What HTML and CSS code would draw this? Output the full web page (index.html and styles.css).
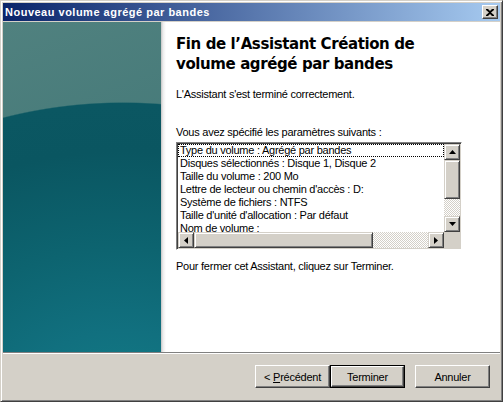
FILE: index.html
```html
<!DOCTYPE html>
<html lang="fr">
<head>
<meta charset="utf-8">
<title>Nouveau volume agrégé par bandes</title>
<link rel="stylesheet" href="styles.css">
</head>
<body>
<div class="window">
  <div class="titlebar">
    <span class="title">Nouveau volume agrégé par bandes</span>
    <span class="close"><svg width="8" height="7" viewBox="0 0 8 7"><path d="M0 0h2l2 2 2-2h2v1l-3 2.5 3 2.5v1h-2l-2-2-2 2h-2v-1l3-2.5-3-2.5z" fill="#000"/></svg></span>
  </div>
  <div class="content">
    <div class="side"></div>
    <div class="main">
      <h1 class="heading">Fin de l’Assistant Création de volume agrégé par bandes</h1>
      <p class="text done">L'Assistant s'est terminé correctement.</p>
      <p class="text params">Vous avez spécifié les paramètres suivants :</p>
      <div class="listbox">
        <div class="listtop">
          <div class="items">
            <div class="item focus">Type du volume : Agrégé par bandes</div>
            <div class="item">Disques sélectionnés : Disque 1, Disque 2</div>
            <div class="item">Taille du volume : 200 Mo</div>
            <div class="item">Lettre de lecteur ou chemin d'accès : D:</div>
            <div class="item">Système de fichiers : NTFS</div>
            <div class="item">Taille d'unité d'allocation : Par défaut</div>
            <div class="item">Nom de volume :</div>
          </div>
          <div class="vscroll">
            <div class="sbtn"><svg width="7" height="4" viewBox="0 0 7 4"><path d="M3.5 0L7 4H0z" fill="#000"/></svg></div>
            <div class="vthumb"></div>
            <div class="vtrack"></div>
            <div class="sbtn"><svg width="7" height="4" viewBox="0 0 7 4"><path d="M0 0h7L3.5 4z" fill="#000"/></svg></div>
          </div>
        </div>
        <div class="listbottom">
          <div class="hscroll">
            <div class="sbtn"><svg width="4" height="7" viewBox="0 0 4 7"><path d="M0 3.5L4 0v7z" fill="#000"/></svg></div>
            <div class="hthumb"></div>
            <div class="htrack"></div>
            <div class="sbtn"><svg width="4" height="7" viewBox="0 0 4 7"><path d="M0 0l4 3.5L0 7z" fill="#000"/></svg></div>
          </div>
          <div class="corner"></div>
        </div>
      </div>
      <p class="text close-hint">Pour fermer cet Assistant, cliquez sur Terminer.</p>
    </div>
  </div>
  <div class="footer">
    <span class="btn"><span>&lt; <u>P</u>récédent</span></span>
    <span class="btn default"><span class="btn-inner">Terminer</span></span>
    <span class="btn cancel">Annuler</span>
  </div>
</div>
</body>
</html>
```
FILE: styles.css
```css
html, body {
  margin: 0;
  padding: 0;
  background: #d4d0c8;
}
.window {
  box-sizing: border-box;
  width: 503px;
  height: 402px;
  background: #d4d0c8;
  border: 1px solid;
  border-color: #d4d0c8 #404040 #404040 #d4d0c8;
  box-shadow: inset 1px 1px #fff, inset -1px -1px #808080;
  padding: 2px;
  display: flex;
  flex-direction: column;
  font-family: "Liberation Sans", Arial, sans-serif;
  font-size: 11px;
  letter-spacing: -0.25px;
  color: #000;
}
.titlebar {
  height: 18px;
  margin-bottom: 1px;
  background: linear-gradient(to right, #0a246a, #a6caf0);
  display: flex;
  align-items: center;
  justify-content: space-between;
  padding: 0 2px 0 2px;
}
.title {
  color: #fff;
  font-weight: bold;
  font-size: 11px;
  letter-spacing: 0.5px;
}
.close {
  box-sizing: border-box;
  width: 16px;
  height: 14px;
  background: #d4d0c8;
  border: 1px solid;
  border-color: #fff #404040 #404040 #fff;
  box-shadow: inset -1px -1px #808080;
  display: flex;
  align-items: center;
  justify-content: center;
  padding-right: 1px;
}
.content {
  height: 330px;
  display: flex;
  background: #fff;
}
.side {
  width: 158px;
  flex: none;
  background:
    radial-gradient(ellipse 400px 327px at 120px 407px, #138088 0%, #11707f 30%, #0d6470 55%, #0a5661 85%, #0b5762 99.6%, rgba(0,0,0,0) 100%),
    linear-gradient(160deg, #50817f 0%, #477b7a 40%, #306b6e 100%);
}
.main {
  flex: 1;
  padding: 12px 20px 0 15px;
  background: linear-gradient(to right, #c4c4c4 0, #ececec 2px, #fff 5px);
}
.heading {
  margin: 0;
  font-family: "DejaVu Sans", Verdana, sans-serif;
  font-weight: bold;
  font-size: 15px;
  line-height: 20px;
  width: 260px;
  letter-spacing: -0.4px;
}
.text {
  margin: 0;
  line-height: 13px;
}
.done {
  margin-top: 14px;
}
.params {
  margin-top: 25px;
}
.listbox {
  margin-top: 3px;
  width: 286px;
  box-sizing: border-box;
  border: 1px solid;
  border-color: #808080 #fff #fff #808080;
  box-shadow: inset 1px 1px #404040, inset -1px -1px #d4d0c8;
  padding: 1px;
  background: #fff;
}
.listtop {
  display: flex;
  height: 88px;
}
.items {
  flex: 1;
  overflow: hidden;
}
.item {
  box-sizing: border-box;
  height: 13px;
  line-height: 13px;
  padding-left: 2px;
  white-space: nowrap;
}
.item.focus {
  outline: 1px dotted #000;
  outline-offset: -1px;
}
.sbtn {
  box-sizing: border-box;
  width: 16px;
  height: 16px;
  flex: none;
  background: #d4d0c8;
  border: 1px solid;
  border-color: #d4d0c8 #404040 #404040 #d4d0c8;
  box-shadow: inset 1px 1px #fff, inset -1px -1px #808080;
  display: flex;
  align-items: center;
  justify-content: center;
}
.vscroll {
  width: 16px;
  display: flex;
  flex-direction: column;
}
.vthumb, .hthumb {
  box-sizing: border-box;
  background: #d4d0c8;
  border: 1px solid;
  border-color: #d4d0c8 #404040 #404040 #d4d0c8;
  box-shadow: inset 1px 1px #fff, inset -1px -1px #808080;
}
.vthumb {
  height: 39px;
}
.vtrack, .htrack {
  flex: 1;
  background: repeating-conic-gradient(#d4d0c8 0 25%, #fff 0 50%) 0 0 / 2px 2px;
}
.listbottom {
  display: flex;
  height: 16px;
}
.hscroll {
  flex: 1;
  display: flex;
}
.hthumb {
  width: 179px;
}
.corner {
  width: 16px;
  background: #d4d0c8;
}
.close-hint {
  margin-top: 10px;
}
.footer {
  flex: 1;
  border-top: 1px solid #808080;
  box-shadow: inset 0 1px #fff;
  display: flex;
  justify-content: flex-end;
  align-items: flex-start;
  padding: 12px 10px 0 0;
}
.btn {
  box-sizing: border-box;
  width: 75px;
  height: 23px;
  display: flex;
  align-items: center;
  justify-content: center;
  background: #d4d0c8;
  border: 1px solid;
  border-color: #fff #404040 #404040 #fff;
  box-shadow: inset -1px -1px #808080;
}
.btn u {
  text-decoration: underline;
}
.btn.default {
  border: 1px solid #000;
  box-shadow: none;
  padding: 0;
}
.btn-inner {
  box-sizing: border-box;
  width: 100%;
  height: 100%;
  display: flex;
  align-items: center;
  justify-content: center;
  border: 1px solid;
  border-color: #fff #404040 #404040 #fff;
  box-shadow: inset -1px -1px #808080;
}
.btn.cancel {
  margin-left: 10px;
}
```
